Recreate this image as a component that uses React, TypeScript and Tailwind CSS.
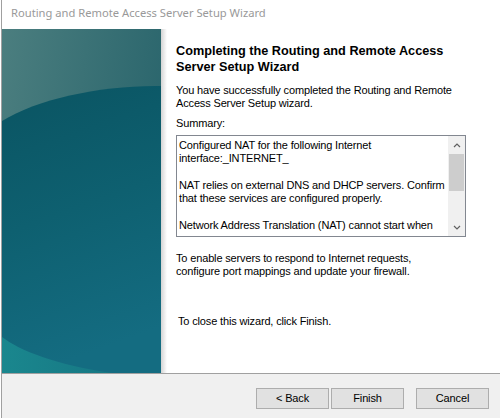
import React from "react";

const body = "font-['Liberation_Sans',Arial,sans-serif] text-[11px] leading-[13px] tracking-[-0.15px] text-black";

const SidePicture = () => (
    <svg className="block size-full" viewBox="0 0 159 344" preserveAspectRatio="none">
        <defs>
            <linearGradient id="top" x1="0" y1="0" x2="1" y2="0.3">
                <stop offset="0" stopColor="#4b7e7f" />
                <stop offset="1" stopColor="#2b666d" />
            </linearGradient>
            <linearGradient id="deep" x1="0" y1="0" x2="0.2" y2="1">
                <stop offset="0" stopColor="#0a5462" />
                <stop offset="0.5" stopColor="#0e6070" />
                <stop offset="1" stopColor="#146c81" />
            </linearGradient>
            <linearGradient id="corner" x1="0" y1="0" x2="1" y2="0">
                <stop offset="0" stopColor="#1a878e" />
                <stop offset="1" stopColor="#15707f" />
            </linearGradient>
        </defs>
        <rect width="159" height="344" fill="url(#top)" />
        <rect x="0" y="290" width="159" height="54" fill="url(#corner)" />
        <path d="M0 92 C 35 70, 100 56, 159 57 L159 344 L 110 344 C 55 336, 18 322, 0 308 Z" fill="url(#deep)" />
    </svg>
);

const Chevron = ({ up }: { up?: boolean }) => (
    <svg width="8" height="5" viewBox="0 0 8 5">
        <path d={up ? "M1 4 L4 1 L7 4" : "M1 1 L4 4 L7 1"} fill="none" stroke="#606060" strokeWidth="1.2" />
    </svg>
);

const WizardButton = ({ label }: { label: string }) => (
    <button className={`w-[73px] h-[21px] bg-[#e1e1e1] border border-[#adadad] ${body} flex items-center justify-center`}>
        {label}
    </button>
);

export default function App() {
    return (
        <div className="w-[500px] h-[418px] bg-white flex flex-col border-l border-[#a0a0a0] ml-px overflow-hidden">
            <div className="h-[29px] flex items-center pl-[9px] pb-[2px] font-['Noto_Sans',sans-serif] text-[11.2px] text-[#999999]">
                Routing and Remote Access Server Setup Wizard
            </div>
            <div className="h-[344px] flex">
                <div className="w-[159px] shrink-0">
                    <SidePicture />
                </div>
                <div className="w-[6px] shrink-0 bg-gradient-to-r from-[#d4d4d4] to-white" />
                <div className="flex-1 pl-[9px] pt-[14px]">
                    <h1 className="font-['Liberation_Sans',Arial,sans-serif] font-bold text-[12.7px] leading-[16px] text-black">
                        Completing the Routing and Remote Access<br />Server Setup Wizard
                    </h1>
                    <p className={`${body} mt-[9px] w-[290px]`}>
                        You have successfully completed the Routing and Remote Access Server Setup wizard.
                    </p>
                    <p className={`${body} mt-[7px]`}>Summary:</p>
                    <div className="mt-[5px] w-[290px] h-[102px] border border-[#828790] flex">
                        <div className={`${body} flex-1 pl-[2px] pt-[3px] overflow-hidden`}>
                            <p>Configured NAT for the following Internet<br />interface:_INTERNET_</p>
                            <p className="mt-[14px]">NAT relies on external DNS and DHCP servers. Confirm that these services are configured properly.</p>
                            <p className="mt-[14px]">Network Address Translation (NAT) cannot start when</p>
                        </div>
                        <div className="w-[17px] bg-[#f0f0f0] flex flex-col">
                            <div className="h-[18px] flex items-center justify-center"><Chevron up /></div>
                            <div className="mx-px h-[37px] bg-[#cdcdcd]" />
                            <div className="flex-1" />
                            <div className="h-[17px] flex items-center justify-center"><Chevron /></div>
                        </div>
                    </div>
                    <p className={`${body} mt-[15px]`}>
                        To enable servers to respond to Internet requests,<br />configure port mappings and update your firewall.
                    </p>
                    <p className={`${body} mt-[37px] pl-[2px]`}>To close this wizard, click Finish.</p>
                </div>
            </div>
            <div className="h-px bg-[#a0a0a0]" />
            <div className="flex-1 bg-[#f0f0f0] flex items-start pt-[14px] pl-[254px]">
                <WizardButton label="< Back" />
                <div className="w-[2px]" />
                <WizardButton label="Finish" />
                <div className="w-[12px]" />
                <WizardButton label="Cancel" />
            </div>
        </div>
    );
}
